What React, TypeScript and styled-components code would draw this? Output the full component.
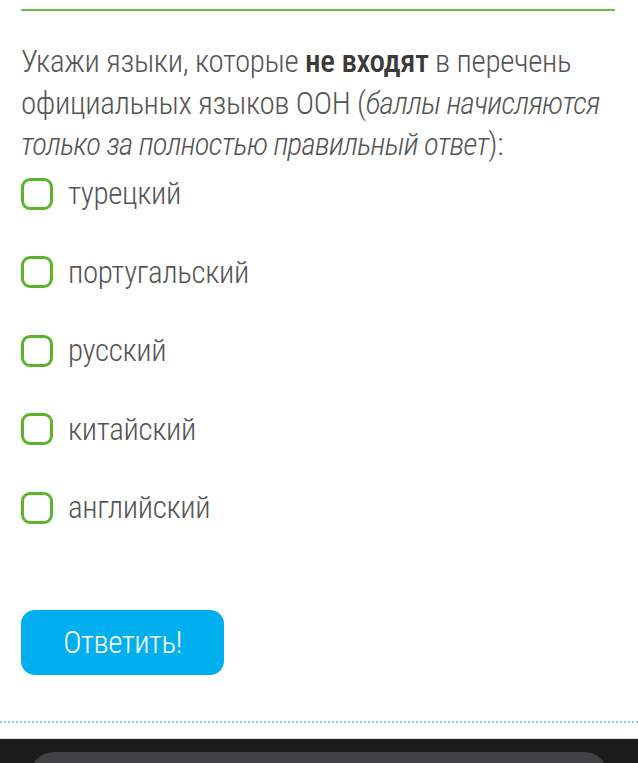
import React from "react";
import styled, { createGlobalStyle } from "styled-components";

const Global = createGlobalStyle`
  html, body { margin: 0; padding: 0; background: #ffffff; }
  body { font-family: "Roboto Condensed", Roboto, "Noto Sans", sans-serif; overflow: hidden; }
`;

const Page = styled.div`
  width: 638px;
  height: 763px;
  display: flex;
  flex-direction: column;
  overflow: hidden;
`;

const Content = styled.div`
  flex: none;
  padding: 9px 25px 0 21px;
  display: flex;
  flex-direction: column;
`;

const TopRule = styled.div`
  height: 2px;
  background: #6cbf45;
  margin-right: -2px;
`;

const Question = styled.p`
  margin: 30px 0 0;
  font-size: 31px;
  line-height: 41.5px;
  font-weight: 300;
  color: #555555;
  letter-spacing: -0.35px;
  b { font-weight: 500; color: #3a3a3a; }
  i { font-style: italic; letter-spacing: -0.75px; }
`;

const Options = styled.div`
  display: flex;
  flex-direction: column;
  gap: 46.5px;
  margin-top: 12px;
`;

const Option = styled.label`
  display: flex;
  align-items: center;
  gap: 15px;
  height: 32px;
  font-size: 31px;
  font-weight: 300;
  color: #555555;
  letter-spacing: -0.35px;
`;

const Box = styled.span`
  width: 26px;
  height: 26px;
  border: 3px solid #5ab52a;
  border-radius: 9px;
  flex: none;
`;

const Submit = styled.button`
  margin-top: 86px;
  width: 203px;
  height: 65px;
  border: none;
  border-radius: 14px;
  background: #01afef;
  color: #ffffff;
  font-family: inherit;
  font-size: 31px;
  font-weight: 300;
  letter-spacing: -0.5px;
  padding: 0;
`;

const DottedRule = styled.div`
  flex: none;
  margin-top: 46px;
  height: 0;
  border-top: 2px dotted #86cde0;
`;

const Spacer = styled.div`
  flex: none;
  height: 15px;
  border-bottom: 1px solid #e4e4e4;
`;

const NavBar = styled.div`
  flex: 1;
  background: #1b1b1b;
  padding: 13px 30px 0 30px;
`;

const NavPill = styled.div`
  height: 40px;
  background: #434345;
  border-radius: 24px 24px 0 0;
`;

const options = ["турецкий", "португальский", "русский", "китайский", "английский"];

export default function App() {
  return (
    <Page>
      <Global />
      <Content>
        <TopRule />
        <Question>
          Укажи языки, которые <b>не входят</b> в перечень официальных языков ООН (
          <i>баллы начисляются только за полностью правильный ответ</i>):
        </Question>
        <Options>
          {options.map((o) => (
            <Option key={o}>
              <Box />
              {o}
            </Option>
          ))}
        </Options>
        <Submit>Ответить!</Submit>
      </Content>
      <DottedRule />
      <Spacer />
      <NavBar>
        <NavPill />
      </NavBar>
    </Page>
  );
}
